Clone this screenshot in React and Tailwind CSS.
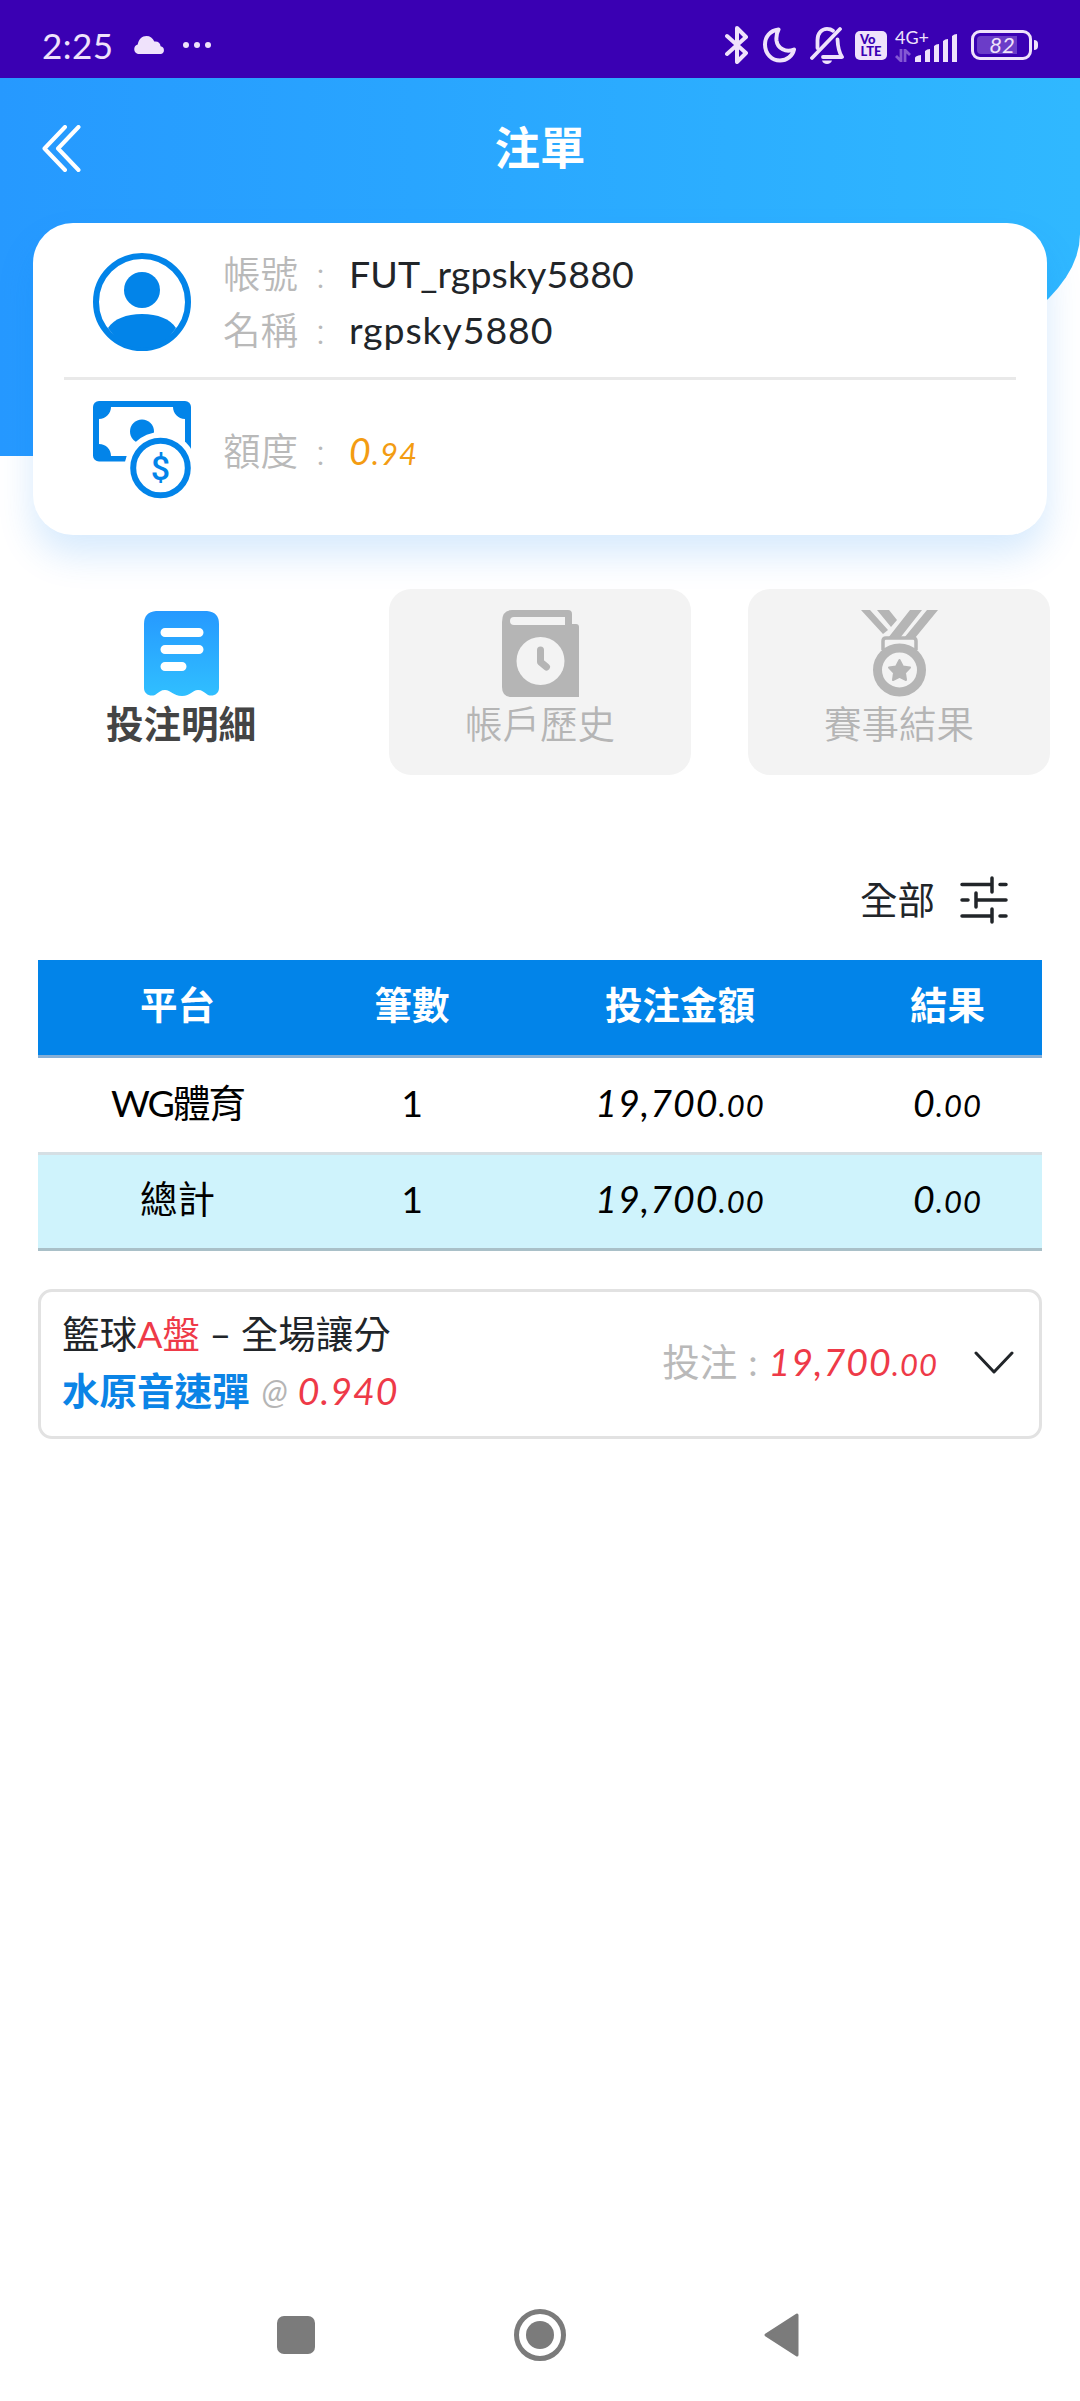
import React, { useState } from "react";

const tabs = [
  { key: "detail", label: "投注明細" },
  { key: "history", label: "帳戶歷史" },
  { key: "result", label: "賽事結果" },
];

const rows = [
  { platform: "WG體育", count: 1, amount: "19,700.00", result: "0.00" },
];
const total = { platform: "總計", count: 1, amount: "19,700.00", result: "0.00" };

// Decimals are printed smaller than the integer part
const Amount = ({ value, className = "" }) => {
  const [whole, cents] = value.split(".");
  return (
    <span className={`italic tracking-[1px] ${className}`}>
      {whole}
      <span className="text-[31px]">.{cents}</span>
    </span>
  );
};

const StatusBar = () => (
  <div className="flex h-[78px] shrink-0 items-center justify-between bg-[#3a00b3] pl-[42px] pr-[42px] pt-3 text-[#efe2fb]">
    <div className="flex items-center">
      <span className="w-[91px] text-[35px] leading-none tracking-[0.5px]">2:25</span>
      <svg width="32" height="18" viewBox="0 0 32 18" fill="currentColor">
        <path d="M5 18a5 5 0 0 1-.3-9.6C5.600 3.500 9 0 13.500 0c3.500 0 6.400 2 7.800 5.600 3.500-.6 6 1.600 6.300 4.600A4 4 0 0 1 28 18z" />
      </svg>
      <div className="ml-[18px] flex gap-[5px]">
        <span className="size-[6px] rounded-full bg-current" />
        <span className="size-[6px] rounded-full bg-current" />
        <span className="size-[6px] rounded-full bg-current" />
      </div>
    </div>
    <div className="flex items-center">
      {/* Bluetooth */}
      <svg width="24" height="38" viewBox="0 0 24 38" fill="none" stroke="currentColor" strokeWidth="4" strokeLinecap="round" strokeLinejoin="round">
        <path d="M2 10l19 17-9 9V2l9 9L2 28" />
      </svg>
      {/* Do not disturb */}
      <svg className="ml-[14px]" width="33" height="36" viewBox="0 0 33 36" fill="none" stroke="currentColor" strokeWidth="4" strokeLinejoin="round">
        <path d="M15.500 2.500C7 3.500 2 10 2 17.500 2 27 9 33.500 17 33.500c7 0 12.500-4.500 14-11-8 3.500-16.500-1-17.500-9-.4-4 .4-8 2-11z" />
      </svg>
      {/* Muted bell */}
      <svg className="ml-[14px]" width="34" height="38" viewBox="0 0 34 38" fill="none" stroke="currentColor" strokeWidth="3.800" strokeLinecap="round" strokeLinejoin="round">
        <path d="M2 32L30 3" />
        <path d="M7.500 22v-8C7.500 7 12 2.800 17 2.800c2.500 0 4.500.7 6 2" />
        <path d="M27.500 13.500c.3 7 1 12 4.500 17.500H13" />
        <path d="M12 34.500h10c-.6 2-2.500 3.500-5 3.500s-4.400-1.500-5-3.500z" fill="currentColor" stroke="none" />
      </svg>
      <div className="ml-[11px] flex h-[29px] w-[32px] flex-col items-center justify-center rounded-[5px] bg-current">
        <span className="w-full pl-[5px] text-left text-[13px] font-black leading-[12px] text-[#3a00b3]">Vo</span>
        <span className="text-[13px] font-black leading-[12px] text-[#3a00b3]">LTE</span>
      </div>
      <div className="ml-[8px] flex h-[34px] w-[63px] items-end">
        <div className="flex w-[20px] flex-col items-start">
          <span className="whitespace-nowrap text-[18px] leading-[16px]">4G+</span>
          <svg className="mt-[4px]" width="16" height="13" viewBox="0 0 16 13" fill="none" stroke="#8458d3" strokeWidth="2.800">
            <path d="M6 0v12L1 7M10 13V1l5 5" />
          </svg>
        </div>
        <svg width="43" height="28" viewBox="0 0 43 28" fill="currentColor">
          <path d="M0 28v-4q0-2 6-3v7zM10 28V17q2-2 5-2v13zM19 28V12q2-2 5-2v18zM28 28V7q2-2 5-2v23zM37 28V2q2-2 5-2v28z" />
        </svg>
      </div>
      <div className="ml-[13px] flex h-[30px] w-[61px] rounded-[9px] border-[3px] border-current p-[3px]">
        <div className="flex w-[40px] items-center justify-center rounded-l-[4px] bg-[#6b3cc8]">
          <span className="ml-[10px] text-[22px] italic leading-none">82</span>
        </div>
      </div>
      <span className="ml-[2px] h-[10px] w-[4px] rounded-r bg-current" />
    </div>
  </div>
);

const UserIcon = () => (
  <svg className="mt-[3px]" width="98" height="98" viewBox="0 0 98 98">
    <circle cx="49" cy="49" r="46" fill="none" stroke="#0284e9" strokeWidth="6" />
    <circle cx="49" cy="37" r="18" fill="#0284e9" />
    <path d="M15 75C21 66 33 61 49 61s28 5 34 14c-8 12-20 20-34 20s-26-8-34-20z" fill="#0284e9" />
  </svg>
);

const MoneyIcon = () => (
  <svg width="98" height="98" viewBox="0 0 98 98">
    <rect width="98" height="60.500" rx="6" fill="#0284e9" />
    <path d="M18 6h62c0 6 5 12 12 12v25c-7 0-12 5-12 12H18c0-7-5-12-12-12V18c7 0 12-6 12-12z" fill="#fff" />
    <circle cx="49" cy="30.500" r="12" fill="#0284e9" />
    <circle cx="67.500" cy="67" r="36" fill="#fff" />
    <circle cx="67.500" cy="67" r="27.300" fill="#fff" stroke="#0284e9" strokeWidth="6" />
    <text x="67.500" y="79" textAnchor="middle" fontSize="34" fontFamily="Roboto, sans-serif" fontWeight="500" fill="#0284e9">$</text>
  </svg>
);

const TabIcon = ({ name }) => {
  if (name === "detail") {
    return (
      <svg width="77" height="87" viewBox="0 0 77 87">
        <defs>
          <linearGradient id="receipt" x1="0" y1="0" x2="0" y2="1">
            <stop offset="0" stopColor="#2699ff" />
            <stop offset="1" stopColor="#30bfff" />
          </linearGradient>
        </defs>
        <path d="M13 1h51q12 1 12 13v64c0 6-6 9-11 7-4-3-6-5-10-5-6 0-7 6-16 6s-11-6-17-6c-4 0-6 2-10 5-5 2-11-1-11-7V14Q1 2 13 1z" fill="url(#receipt)" />
        <path d="M22 22.500h34M22 39.500h34M22 56.500h17" stroke="#fff" strokeWidth="9" strokeLinecap="round" />
      </svg>
    );
  }
  if (name === "history") {
    return (
      <svg width="77" height="87" viewBox="0 0 77 87">
        <path d="M10 0h56q4 0 4 4v10h4q3 0 3 3v70H10Q0 87 0 77V12Q0 0 10 0z" fill="#b5b5b5" />
        <path d="M12 7h51v8H12a4 4 0 0 1 0-8z" fill="#f3f3f3" />
        <circle cx="38.500" cy="51" r="24" fill="#f3f3f3" />
        <path d="M38.500 40v12l6 5" fill="none" stroke="#b5b5b5" strokeWidth="7" strokeLinecap="round" strokeLinejoin="round" />
      </svg>
    );
  }
  return (
    <svg width="77" height="87" viewBox="0 0 77 87" fill="#b5b5b5">
      <path d="M0 0h9l18 20-5 4zM16 0h12l8 10-6 7zM49 0h12L39 28H27zM66 0h11L54 28H43z" />
      <path d="M22 40V31q0-3 3-3h27q3 0 3 3v9" fill="none" stroke="#b5b5b5" strokeWidth="3.500" />
      <circle cx="38.500" cy="60" r="22" fill="#f3f3f3" stroke="#b5b5b5" strokeWidth="9" />
      <path d="M38.500 50l3.400 6.500 7.100 1-5 5.300 1 7.200-6.500-3.200-6.500 3.200 1-7.200-5-5.300 7.100-1z" stroke="#b5b5b5" strokeWidth="2" strokeLinejoin="round" />
    </svg>
  );
};

const Field = ({ label, children }) => (
  <div className="flex h-[56px] items-center">
    <span className="w-[93px] font-[350] text-[#b9b9b9]">{label}</span>
    <span className="w-[33px] font-[350] text-[#b9b9b9]">:</span>
    {children}
  </div>
);

const App = () => {
  const [activeTab, setActiveTab] = useState("detail");
  const [open, setOpen] = useState(false);

  return (
    <div className="flex h-[2401px] w-[1080px] flex-col overflow-hidden bg-white font-[Lato,'Noto_Sans_CJK_TC',sans-serif] text-[37.5px] text-[#212529]">
      <StatusBar />

      {/* Header */}
      <div className="h-[378px] shrink-0 rounded-br-[730px_222px] bg-linear-to-r from-[#2699ff] to-[#30b8ff]">
        <div className="grid h-[140px] grid-cols-3 items-center text-white">
          <button className="ml-[42px] w-fit">
            <svg width="40" height="47" viewBox="0 0 40 47" fill="none" stroke="currentColor" strokeWidth="4" strokeLinecap="round" strokeLinejoin="round">
              <path d="M23 2L2.500 23.500 23 45M36.500 2L16 23.500 36.500 45" />
            </svg>
          </button>
          <h1 className="text-center text-[45.5px] font-bold leading-none">注單</h1>
        </div>
      </div>

      {/* Account card */}
      <div className="mx-[33px] -mt-[233px] h-[312px] shrink-0 rounded-[40px] bg-white px-[31px] shadow-[0_20px_36px_rgba(0,122,240,0.16)]">
        <div className="flex h-[157px] items-center border-b-3 border-[#e9e9e9] pl-[29px]">
          <UserIcon />
          <div className="ml-[32px] flex flex-col pt-[5px]">
            <Field label="帳號">
              <span className="tracking-[0.1px]">FUT_rgpsky5880</span>
            </Field>
            <Field label="名稱">
              <span className="tracking-[0.9px]">rgpsky5880</span>
            </Field>
          </div>
        </div>
        <div className="flex h-[140px] items-center pl-[29px]">
          <MoneyIcon />
          <div className="ml-[32px] pt-[3px]">
            <Field label="額度">
              <Amount value="0.94" className="text-[#f39c12]" />
            </Field>
          </div>
        </div>
      </div>

      {/* Tabs */}
      <div className="mt-[54px] flex gap-[57px] pl-[30px]">
        {tabs.map((tab) => (
          <button
            key={tab.key}
            onClick={() => setActiveTab(tab.key)}
            className={`flex h-[186px] w-[302px] shrink-0 flex-col items-center rounded-[22px] pt-[21px] ${
              activeTab === tab.key ? "bg-white font-bold text-[#444]" : "bg-[#f3f3f3] font-[350] text-[#b5b5b5]"
            }`}
          >
            <TabIcon name={tab.key} />
            <span className="mt-[8px] leading-[37px]">{tab.label}</span>
          </button>
        ))}
      </div>

      {/* Filter */}
      <div className="mt-[95px] flex h-[60px] items-center justify-end gap-[25px] pr-[72px]">
        <span>全部</span>
        <svg width="48" height="48" viewBox="0 0 48 48" fill="none" stroke="#212529" strokeWidth="3.500" strokeLinecap="round">
          <path d="M2 8.500h30M40 8.500h6M32 2v14M2 24h6M16 24h30M16 17v14M2 40h30M40 40h6M32 33v13" />
        </svg>
      </div>

      {/* Summary table */}
      <table className="mx-[38px] mt-[30px] w-[1004px] table-fixed border-collapse text-center text-black">
        <colgroup>
          <col className="w-[279px]" />
          <col className="w-[190px]" />
          <col className="w-[346px]" />
          <col className="w-[189px]" />
        </colgroup>
        <thead>
          <tr className="h-[96px] border-b-3 border-[#86afd6] bg-[#0284e9] text-white *:pb-[4px]">
            <th>平台</th>
            <th>筆數</th>
            <th>投注金額</th>
            <th>結果</th>
          </tr>
        </thead>
        <tbody>
          {rows.map((row) => (
            <tr key={row.platform} className="h-[97px] border-b-3 border-[#d5dfe4] *:pb-[3px]">
              <td className="tracking-[-2px]">{row.platform}</td>
              <td>{row.count}</td>
              <td><Amount value={row.amount} /></td>
              <td><Amount value={row.result} /></td>
            </tr>
          ))}
          <tr className="h-[96px] border-b-3 border-[#a9c0c8] bg-[#cff3fc] *:pb-[3px]">
            <td>{total.platform}</td>
            <td>{total.count}</td>
            <td><Amount value={total.amount} /></td>
            <td><Amount value={total.result} /></td>
          </tr>
        </tbody>
      </table>

      {/* Bet item */}
      <div
        onClick={() => setOpen(!open)}
        className="mx-[38px] mt-[38px] flex h-[150px] shrink-0 items-center justify-between rounded-[14px] border-3 border-[#e2e2e2] pl-[21px] pr-[25px]"
      >
        <div className="pb-[3px] leading-[57px]">
          <div>
            籃球<span className="text-[#ee3a48]">A盤</span> – 全場讓分
          </div>
          <div className="flex">
            <span className="font-bold text-[#0b84e6]">水原音速彈</span>
            <span className="ml-[12px] mr-[10px] text-[34px] italic text-[#b5b5b5]">@</span>
            <span className="italic tracking-[1px] text-[#ee3a48]">0.940</span>
          </div>
        </div>
        <div className="flex items-center pb-[2px]">
          <span className="text-[#b9b9b9]">投注</span>
          <span className="mx-[11px] text-[#b9b9b9]">:</span>
          <Amount value="19,700.00" className="text-[#ee3a48]" />
          <svg className={`ml-[36px] ${open ? "rotate-180" : ""}`} width="40" height="24" viewBox="0 0 40 24" fill="none" stroke="#212529" strokeWidth="3" strokeLinecap="round" strokeLinejoin="round">
            <path d="M2 2l18 19L38 2" />
          </svg>
        </div>
      </div>

      {/* System navigation */}
      <div className="mt-auto mb-[38px] flex h-[56px] items-center pl-[277px]">
        <span className="size-[38px] rounded-[7px] bg-[#7b7b7b]" />
        <span className="ml-[199px] flex size-[52px] items-center justify-center rounded-full border-[5px] border-[#7b7b7b]">
          <span className="size-[28px] rounded-full bg-[#7b7b7b]" />
        </span>
        <svg className="ml-[198px]" width="35" height="44" viewBox="0 0 35 44">
          <path d="M2 22L33 2v40z" fill="#7b7b7b" stroke="#7b7b7b" strokeWidth="3" strokeLinejoin="round" />
        </svg>
      </div>
    </div>
  );
};

export default App;
